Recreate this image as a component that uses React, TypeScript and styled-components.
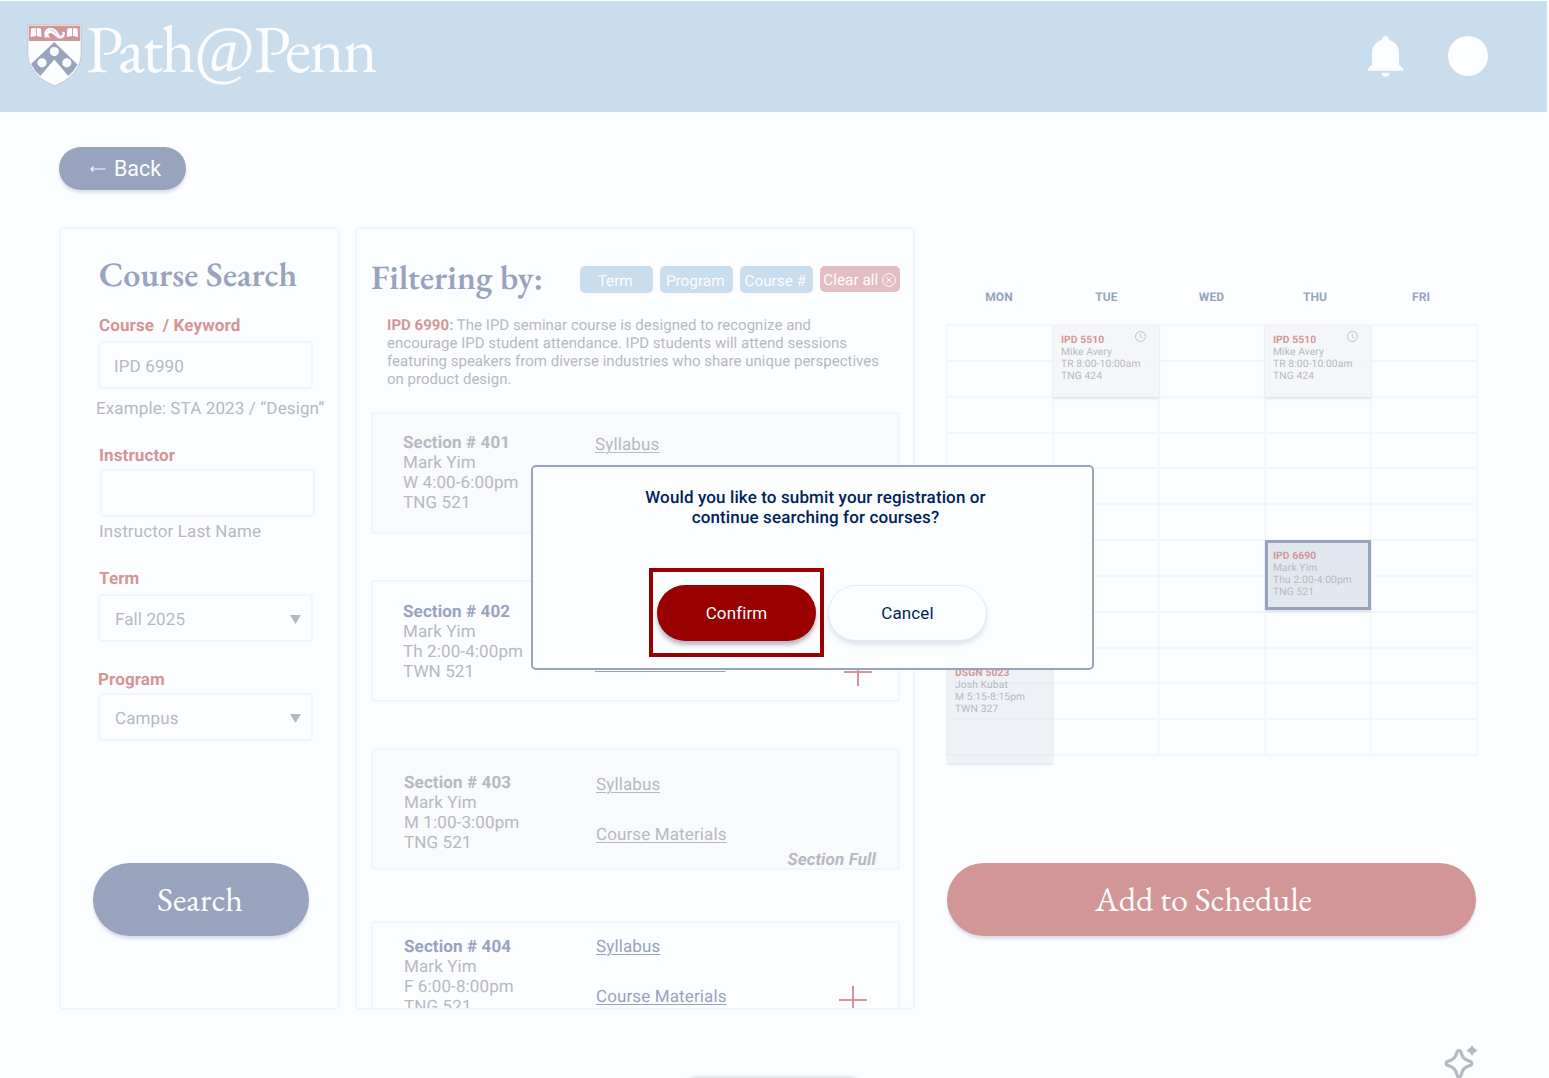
import React from 'react'
import styled, { createGlobalStyle, css } from 'styled-components'

const color = {
  page: '#fcfdff',
  sky: '#cadded',
  navy: '#98a3bd',
  deepNavy: '#011f5b',
  red: '#d39697',
  deepRed: '#990000',
  grey: '#b6b9c1',
  line: '#f4f5f8',
  gridLine: '#f5f6f9',
}

const serif = "'EB Garamond', 'Liberation Serif', serif"

const GlobalStyle = createGlobalStyle`
  * {
    box-sizing: border-box;
  }
  body {
    margin: 0;
    background: ${color.page};
    color: ${color.grey};
    font-family: Roboto, 'Liberation Sans', sans-serif;
    font-size: 17px;
    letter-spacing: 0.12px;
    line-height: 20px;
    text-rendering: geometricPrecision;
  }
  button {
    border: 0;
    padding: 0;
    font-family: inherit;
  }
`

interface Section {
  id: number
  time: string
  room: string
  full?: boolean
  note?: string
  square?: boolean
  gap: number
  pad: number
  linkPad: number
  inset: number
  plusTop?: number
  plusRight?: number
}

const SECTIONS: Section[] = [
  {
    id: 401,
    time: 'W 4:00-6:00pm',
    room: 'TNG 521',
    full: true,
    square: true,
    gap: 0,
    pad: 19,
    linkPad: 21,
    inset: 30,
  },
  {
    id: 402,
    time: 'Th 2:00-4:00pm',
    room: 'TWN 521',
    gap: 46,
    pad: 20,
    linkPad: 22,
    inset: 30,
    plusTop: 76,
    plusRight: 26,
  },
  {
    id: 403,
    time: 'M 1:00-3:00pm',
    room: 'TNG 521',
    full: true,
    note: 'Section Full',
    gap: 46,
    pad: 23,
    linkPad: 25,
    inset: 31,
  },
  {
    id: 404,
    time: 'F 6:00-8:00pm',
    room: 'TNG 521',
    gap: 51,
    pad: 14,
    linkPad: 14,
    inset: 31,
    plusTop: 63,
    plusRight: 31,
  },
]

const DAYS = [
  { name: 'MON', nudge: 0 },
  { name: 'TUE', nudge: 3 },
  { name: 'WED', nudge: 1 },
  { name: 'THU', nudge: -4 },
  { name: 'FRI', nudge: -4 },
]
const SLOTS = 12

const Shield = () => (
  <svg width="55" height="63" viewBox="0 0 55 63">
    <path
      d="M.8.8H54.2V30C54.2 44 43 56 27.5 61.8 12 56 .8 44 .8 30Z"
      fill={color.page}
      stroke="#c3c7cf"
      strokeWidth="1"
    />
    <path d="M1.8 1.8H53.2V17H1.8Z" fill={color.red} />
    <path d="M1.5 17.5H53.5" stroke={color.page} strokeWidth="1" />
    <path
      d="M27.3 18 50.5 40.5Q47 47 41.3 52L27.3 35.5 13.3 52Q7.5 47 4 40Z"
      fill={color.navy}
    />
    <g fill={color.page}>
      <circle cx="27.3" cy="27.6" r="4.6" />
      <circle cx="15" cy="38.8" r="4.6" />
      <circle cx="39.8" cy="38.8" r="4.6" />
      <path d="M4 4.500 8.700 4 9 12 3.500 13ZM9.700 4 14 4.500 14.500 13 9.700 12Z" />
      <path d="M40.300 4.500 45 4 45.200 12 39.700 13ZM46 4 50.500 4.500 51 13 46 12Z" />
      <path d="M18 14C16.500 9 17.500 4.500 23 4 27 3.600 30 6 31.500 9.500 33 12 35 12 36 9.500L34.800 7.500 38 8.500C38 12.500 36 14.800 33 14.500 29 14 27 9.500 23.500 9 21.500 9 21 10.500 22 12.500L24 14.500 20.500 13Z" />
    </g>
    <path
      d="M3.500 14.200H15M39 14.200H51.500M22 6Q27 5.500 29.500 10"
      fill="none"
      stroke={color.navy}
      strokeWidth=".6"
    />
  </svg>
)

const Bell = () => (
  <svg width="35" height="41" viewBox="0 0 35 41" fill={color.page}>
    <path d="M17.500 0A3.700 3.700 0 0 1 21.200 4C27 5.500 31 10.500 31 16.500V28.500L35 32.500V34.800H0V32.500L4 28.500V16.500C4 10.500 8 5.500 13.800 4A3.700 3.700 0 0 1 17.500 0Z" />
    <path d="M13.500 36.800H21.500A4 4 0 0 1 13.500 36.800Z" />
  </svg>
)

const BackArrow = () => (
  <svg width="16" height="8" viewBox="0 0 16 8" fill="none">
    <path d="M3.500 1.500 1 4 3.500 6.500M1 4H15.500" stroke={color.page} strokeWidth="1.200" />
  </svg>
)

const CircleX = () => (
  <svg width="14" height="14" viewBox="0 0 14 14" fill="none">
    <circle cx="7" cy="7" r="6.300" stroke={color.page} />
    <path d="M4.300 4.300 9.700 9.700M9.700 4.300 4.300 9.700" stroke={color.page} />
  </svg>
)

const Clock = () => (
  <svg width="11" height="11" viewBox="0 0 11 11" fill="none" stroke={color.grey}>
    <circle cx="5.500" cy="5.500" r="5" strokeWidth=".9" />
    <path d="M5.300 2.500V5.800L7.500 7.200" strokeWidth=".8" />
  </svg>
)

const Caret = () => (
  <svg width="11" height="9" viewBox="0 0 11 9">
    <path d="M0 0H11L5.500 9Z" fill={color.grey} />
  </svg>
)

const Plus = () => (
  <svg width="28" height="28" viewBox="0 0 28 28">
    <path d="M14 0V28M0 14H28" stroke={color.red} strokeWidth="2" />
  </svg>
)

const Sparkle = () => (
  <svg width="34" height="34" viewBox="0 0 34 34">
    <path
      d="M15 5.500C16 5.500 16.800 6.200 17.100 7.300 18.200 12 19.500 14.500 26.500 16.600 28.400 17.200 28.400 19.800 26.500 20.300 20 22.300 18.400 24.500 17.200 30 16.700 32.200 13.700 32.200 13.100 30 11.700 24.500 9.800 22.300 3.500 20.300 1.600 19.800 1.600 17.200 3.500 16.600 10 14.500 11.800 12 12.900 7.300 13.200 6.200 14 5.500 15 5.500Z"
      fill="none"
      stroke={color.grey}
      strokeWidth="3.200"
    />
    <path
      d="M28 .5Q29.800 4 33.300 5.500 29.800 7 28 10.500 26.200 7 22.700 5.500 26.200 4 28 .5Z"
      fill={color.grey}
      stroke={color.grey}
      strokeWidth=".6"
    />
  </svg>
)

const App: React.FC = () => {
  return (
    <Page>
      <GlobalStyle />
      <Header>
        <Shield />
        <Wordmark>
          <span>Path</span>
          <At>@</At>
          <span>Penn</span>
        </Wordmark>
        <HeaderActions>
          <Bell />
          <Avatar />
        </HeaderActions>
      </Header>

      <BackButton>
        <BackArrow />
        Back
      </BackButton>

      <Columns>
        <SearchPanel>
          <Title $left={1}>Course Search</Title>
          <Label $top={21}>Course&nbsp; / Keyword</Label>
          <Field $top={5} $pad={14}>IPD 6990</Field>
          <Hint $top={10} $shift={-2}>Example: STA 2023 / “Design”</Hint>
          <Label $top={27}>Instructor</Label>
          <Field $top={3} $shift={2} />
          <Hint $top={5} $shift={1}>Instructor Last Name</Hint>
          <Label $top={27}>Term</Label>
          <Field $top={5}>
            Fall 2025 <Caret />
          </Field>
          <Label $top={28} $shift={-1}>Program</Label>
          <Field $top={3}>
            Campus <Caret />
          </Field>
          <SearchButton>Search</SearchButton>
        </SearchPanel>

        <ResultsPanel>
          <FilterRow>
            <Title>Filtering by:</Title>
            <Chips>
              <Chip>Term</Chip>
              <Chip>Program</Chip>
              <Chip>Course #</Chip>
              <ClearChip>
                Clear all <CircleX />
              </ClearChip>
            </Chips>
          </FilterRow>
          <Description>
            <CourseCode>IPD 6990</CourseCode>
            <b>:</b> The IPD seminar course is designed to recognize and
            encourage IPD student attendance. IPD students will attend sessions
            featuring speakers from diverse industries who share unique
            perspectives on product design.
          </Description>
          {SECTIONS.map((s) => (
            <SectionCard key={s.id} $full={s.full} $square={s.square} $gap={s.gap}>
              <SectionInfo $pad={s.pad} $inset={s.inset}>
                <SectionName $full={s.full}>Section # {s.id}</SectionName>
                <span>Mark Yim</span>
                <span>{s.time}</span>
                <span>{s.room}</span>
              </SectionInfo>
              <SectionLinks $pad={s.linkPad}>
                <SectionLink $full={s.full}>Syllabus</SectionLink>
                <SectionLink $full={s.full}>Course Materials</SectionLink>
              </SectionLinks>
              {s.note && <SectionNote>{s.note}</SectionNote>}
              {s.plusTop && (
                <AddSection $top={s.plusTop} $right={s.plusRight}>
                  <Plus />
                </AddSection>
              )}
            </SectionCard>
          ))}
        </ResultsPanel>

        <Schedule>
          <DayRow>
            {DAYS.map((day) => (
              <Day key={day.name} $nudge={day.nudge}>
                {day.name}
              </Day>
            ))}
          </DayRow>
          <Calendar>
            {DAYS.map((day, col) =>
              Array.from({ length: SLOTS }, (_, row) => (
                <Cell key={day.name + row} $col={col + 1} $row={row + 1} />
              )),
            )}
            {[2, 4].map((col) => (
              <CourseBlock key={col} $col={col} $row={1} $span={2} $kind="pending">
                <BlockHead>
                  IPD 5510
                  <Clock />
                </BlockHead>
                <span>Mike Avery</span>
                <span>TR 8:00-10:00am</span>
                <span>TNG 424</span>
              </CourseBlock>
            ))}
            <CourseBlock $col={4} $row={7} $span={2} $kind="selected">
              <BlockHead>IPD 6690</BlockHead>
              <span>Mark Yim</span>
              <span>Thu 2:00-4:00pm</span>
              <span>TNG 521</span>
            </CourseBlock>
            <CourseBlock $col={1} $row={10} $span={3} $kind="enrolled">
              <BlockHead>DSGN 5023</BlockHead>
              <span>Josh Kubat</span>
              <span>M 5:15-8:15pm</span>
              <span>TWN 327</span>
            </CourseBlock>
          </Calendar>
          <AddButton>Add to Schedule</AddButton>
        </Schedule>
      </Columns>

      <Dialog>
        <Question>
          Would you like to submit your registration or
          <br />
          continue searching for courses?
        </Question>
        <DialogActions>
          <ConfirmFrame>
            <DialogButton $primary>Confirm</DialogButton>
          </ConfirmFrame>
          <DialogButton>Cancel</DialogButton>
        </DialogActions>
      </Dialog>

      <Assistant>
        <Sparkle />
      </Assistant>
      <BottomTab />
    </Page>
  )
}

const pillShadow = css`
  box-shadow: 0 3px 3px rgba(60, 90, 130, 0.17);
`

const Page = styled.div`
  position: relative;
  width: 1549px;
  height: 1078px;
  padding-top: 1px;
  overflow: hidden;
  background: ${color.page};
`

const Header = styled.header`
  display: flex;
  width: 1547px;
  height: 111px;
  padding: 23px 59px 0 27px;
  background: ${color.sky};
`

const Wordmark = styled.div`
  display: flex;
  align-items: baseline;
  height: 60px;
  margin: -3px 0 0 4px;
  color: ${color.page};
  font-family: ${serif};
  font-size: 67.2px;
  letter-spacing: -2.1px;
  line-height: 56px;
  white-space: nowrap;
`

const At = styled.i`
  margin: 0 1px 0 0;
  font-family: 'Liberation Serif', serif;
  font-size: 66px;
`

const HeaderActions = styled.div`
  display: flex;
  gap: 45px;
  margin-left: auto;
  padding-top: 12px;
`

const Avatar = styled.div`
  width: 40px;
  height: 40px;
  border-radius: 50%;
  background: ${color.page};
`

const BackButton = styled.button`
  display: flex;
  align-items: center;
  gap: 8px;
  width: 127px;
  height: 43px;
  margin: 35px 0 0 59px;
  padding-left: 31px;
  border-radius: 22px;
  background: ${color.navy};
  color: ${color.page};
  font-size: 21.4px;
  ${pillShadow}
`

const Columns = styled.main`
  display: flex;
  align-items: flex-start;
  margin: 37px 0 0 59px;
`

const panel = css`
  height: 783px;
  border: 2px solid ${color.line};
  border-radius: 5px;
`

const SearchPanel = styled.section`
  ${panel}
  display: flex;
  flex-direction: column;
  align-items: flex-start;
  width: 281px;
  padding: 26px 0 0 37px;
`

const Title = styled.h1<{ $left?: number }>`
  margin: 0 0 0 ${(props) => props.$left || 0}px;
  color: ${color.navy};
  font-family: ${serif};
  font-size: 34.2px;
  font-weight: 600;
  letter-spacing: 0.05px;
  line-height: 40px;
  white-space: nowrap;
`

const Label = styled.label<{ $top: number; $shift?: number }>`
  margin: ${(props) => props.$top}px 0 0 ${(props) => 1 + (props.$shift || 0)}px;
  color: ${color.red};
  font-weight: 700;
`

const Field = styled.div<{ $top: number; $shift?: number; $pad?: number }>`
  display: flex;
  align-items: center;
  justify-content: space-between;
  width: 215px;
  height: 48px;
  margin: ${(props) => props.$top}px 0 0 ${(props) => props.$shift || 0}px;
  padding: 3px 10px 0 ${(props) => props.$pad || 15}px;
  border: 2px solid ${color.line};
  border-radius: 4px;
`

const Hint = styled.div<{ $top: number; $shift: number }>`
  margin: ${(props) => props.$top}px 0 0 ${(props) => props.$shift}px;
  white-space: nowrap;
`

const bigPill = css`
  height: 73px;
  border-radius: 37px;
  color: ${color.page};
  font-family: ${serif};
  font-size: 34.2px;
  letter-spacing: 0;
  ${pillShadow}
`

const SearchButton = styled.button`
  ${bigPill}
  width: 216px;
  margin: 122px 0 0 -5px;
  padding: 0 2px 2px 0;
  background: ${color.navy};
`

const ResultsPanel = styled.section`
  ${panel}
  width: 560px;
  margin-left: 15px;
  padding: 29px 13px 0 14px;
  overflow: hidden;
`

const FilterRow = styled.div`
  display: flex;
  justify-content: space-between;
`

const Chips = styled.div`
  display: flex;
  gap: 6.5px;
  padding-top: 8px;
`

const Chip = styled.div`
  display: flex;
  align-items: center;
  justify-content: center;
  width: 73.5px;
  height: 27px;
  padding: 2px 2px 0 0;
  border-radius: 5px;
  background: ${color.sky};
  color: ${color.page};
  font-size: 15.3px;
  letter-spacing: 0;
  white-space: nowrap;
`

const ClearChip = styled(Chip)`
  gap: 4px;
  width: 80.5px;
  height: 26px;
  padding-right: 0;
  background: #e3bdc1;
`

const Description = styled.p`
  width: 496px;
  height: 72px;
  margin: 18px 0 24px 16px;
  font-size: 15px;
  letter-spacing: 0.02px;
  line-height: 18px;
`

const CourseCode = styled.b`
  color: ${color.red};
`

const SectionCard = styled.article<{ $full?: boolean; $square?: boolean; $gap: number }>`
  display: flex;
  width: 529px;
  height: 122px;
  margin-top: ${(props) => props.$gap}px;
  border: 2px solid ${color.line};
  border-radius: ${(props) => (props.$square ? 0 : 4)}px;
  background: ${(props) => (props.$full ? '#f9fafb' : 'transparent')};
`

const SectionInfo = styled.div<{ $pad: number; $inset: number }>`
  display: flex;
  flex-direction: column;
  width: 192px;
  margin-left: ${(props) => props.$inset}px;
  padding-top: ${(props) => props.$pad}px;
`

const SectionName = styled.b<{ $full?: boolean }>`
  color: ${(props) => (props.$full ? color.grey : color.navy)};
`

const SectionLinks = styled.div<{ $pad: number }>`
  display: flex;
  flex-direction: column;
  gap: 30px;
  padding-top: ${(props) => props.$pad}px;
`

const SectionLink = styled.a<{ $full?: boolean }>`
  color: ${(props) => (props.$full ? color.grey : color.navy)};
  text-decoration: underline;
  text-decoration-thickness: 1px;
  text-underline-offset: 2px;
`

const SectionNote = styled.b`
  align-self: flex-end;
  margin: 0 22px -2px auto;
  font-style: italic;
`

const AddSection = styled.div<{ $top: number; $right?: number }>`
  height: 28px;
  margin: ${(props) => props.$top}px ${(props) => props.$right}px 0 auto;
`

const Schedule = styled.section`
  width: 532px;
  margin-left: 31px;
  padding-top: 60px;
`

const DayRow = styled.div`
  display: flex;
`

const Day = styled.div<{ $nudge: number }>`
  width: 106px;
  padding-left: ${(props) => Math.max(props.$nudge, 0)}px;
  padding-right: ${(props) => Math.max(-props.$nudge, 0)}px;
  color: ${color.navy};
  font-size: 12px;
  font-weight: 700;
  text-align: center;
`

const Calendar = styled.div`
  display: grid;
  grid-template-columns: repeat(5, 106px);
  grid-template-rows: repeat(${SLOTS}, 35.85px);
  width: 532px;
  margin-top: 17px;
  border: solid ${color.gridLine};
  border-width: 2px 0 0 2px;
`

const Cell = styled.div<{ $col: number; $row: number }>`
  grid-area: ${(props) => props.$row} / ${(props) => props.$col};
  border: solid ${color.gridLine};
  border-width: 0 2px 2px 0;
`

const blockKinds = {
  pending: css`
    margin: -1px 1px 1px -1px;
    padding: 9px 8px;
    background: rgba(243, 244, 247, 0.85);
  `,
  selected: css`
    margin: -1px 1px 3px -1px;
    padding: 7px 5px;
    border: 3px solid ${color.navy};
    background: #e2e8f0;
  `,
  enrolled: css`
    margin: 8px 1px -7px -1px;
    padding: 10px 8px;
    background: rgba(224, 229, 238, 0.5);
  `,
}

const CourseBlock = styled.div<{
  $col: number
  $row: number
  $span: number
  $kind: keyof typeof blockKinds
}>`
  display: flex;
  flex-direction: column;
  grid-area: ${(props) => props.$row} / ${(props) => props.$col} / span ${(props) => props.$span};
  box-shadow: 0 2px 2px rgba(80, 100, 150, 0.15);
  font-size: 10.3px;
  letter-spacing: 0.1px;
  line-height: 12px;
  white-space: nowrap;
  ${(props) => blockKinds[props.$kind]}
`

const BlockHead = styled.b`
  display: flex;
  justify-content: space-between;
  height: 12px;
  padding-right: 5px;
  color: ${color.red};
  svg {
    margin-top: -3px;
  }
`

const AddButton = styled.button`
  ${bigPill}
  width: 529px;
  margin: 107px 0 0 1px;
  padding: 0 16px 2px 0;
  background: ${color.red};
`

const Dialog = styled.div`
  position: absolute;
  top: 465px;
  left: 531px;
  width: 563px;
  height: 205px;
  padding-top: 21px;
  border: 2px solid ${color.navy};
  border-radius: 5px;
  background: ${color.page};
  color: ${color.deepNavy};
`

const Question = styled.p`
  margin: 0 0 0 6px;
  font-weight: 500;
  text-align: center;
`

const DialogActions = styled.div`
  display: flex;
  align-items: center;
  gap: 4px;
  margin: 40px 0 0 116px;
`

const ConfirmFrame = styled.div`
  width: 175px;
  height: 89px;
  padding: 13px 4px 0;
  border: 4px solid ${color.deepRed};
`

const DialogButton = styled.button<{ $primary?: boolean }>`
  width: 159px;
  height: 56px;
  border: ${(props) => (props.$primary ? 0 : '1.5px solid #e6e9f1')};
  border-radius: 28px;
  background: ${(props) => (props.$primary ? color.deepRed : color.page)};
  box-shadow: 0 4px 4px
    ${(props) => (props.$primary ? 'rgba(20, 30, 60, 0.3)' : 'rgba(60, 90, 130, 0.14)')};
  color: ${(props) => (props.$primary ? color.page : color.deepNavy)};
  font-size: 17px;
  letter-spacing: 0.12px;
`

const Assistant = styled.div`
  position: absolute;
  top: 1045px;
  left: 1444px;
  height: 34px;
`

// tucked under the bottom edge, only its shadow shows
const BottomTab = styled.div`
  position: absolute;
  top: 1079px;
  left: 688px;
  width: 170px;
  height: 20px;
  border-radius: 8px;
  box-shadow: 0 0 4px 1px rgba(90, 100, 120, 0.4);
`

export default App
